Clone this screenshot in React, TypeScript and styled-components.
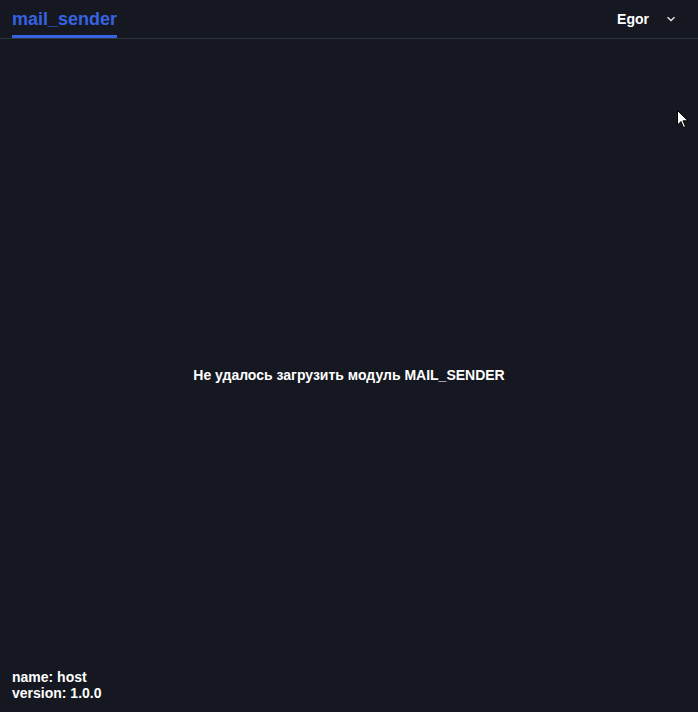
import React from "react";
import styled, { createGlobalStyle } from "styled-components";

const Global = createGlobalStyle`
  html, body { margin: 0; padding: 0; background: #151820; }
  body { font-family: "Liberation Sans", Arial, sans-serif; color: #ffffff; }
  * { box-sizing: border-box; }
`;

const Page = styled.div`
  position: relative;
  width: 698px;
  height: 712px;
  background: #151820;
  display: flex;
  flex-direction: column;
  overflow: hidden;
`;

const Header = styled.header`
  height: 39px;
  border-bottom: 1px solid #2f333d;
  display: flex;
  align-items: stretch;
  justify-content: space-between;
  padding: 0 22px 0 12px;
`;

const Tab = styled.div`
  display: flex;
  align-items: center;
  font-size: 18px;
  font-weight: 700;
  color: #3563e2;
  border-bottom: 3px solid #3563e2;
  padding-top: 4px;
  height: 38px;
`;

const User = styled.div`
  display: flex;
  align-items: center;
  gap: 17px;
  font-size: 14px;
  font-weight: 700;
  padding-bottom: 1px;
`;

const Main = styled.main`
  flex: 1;
  display: flex;
  align-items: center;
  justify-content: center;
  font-size: 14px;
  font-weight: 700;
  padding-bottom: 1px;
`;

const Footer = styled.footer`
  position: absolute;
  left: 12px;
  bottom: 11px;
  font-size: 14px;
  font-weight: 700;
  line-height: 16px;
`;

const Cursor = styled.svg`
  position: absolute;
  left: 677px;
  top: 110px;
`;

export default function App() {
  return (
    <>
      <Global />
      <Page>
        <Header>
          <Tab>mail_sender</Tab>
          <User>
            <span>Egor</span>
            <svg width="10" height="6" viewBox="0 0 10 6">
              <path d="M1.5 1.2 L5 4.5 L8.5 1.2" fill="none" stroke="#e6e6e6" strokeWidth="1.4" />
            </svg>
          </User>
        </Header>
        <Main>Не удалось загрузить модуль MAIL_SENDER</Main>
        <Footer>
          <div>name: host</div>
          <div>version: 1.0.0</div>
        </Footer>
        <Cursor width="12" height="19" viewBox="0 0 12 19">
          <path d="M0.5 0.5 L0.5 15 L4 11.5 L6.5 17.5 L8.5 16.5 L6 10.8 L11 10.8 Z" fill="#ffffff" stroke="#000" strokeWidth="1" />
        </Cursor>
      </Page>
    </>
  );
}
